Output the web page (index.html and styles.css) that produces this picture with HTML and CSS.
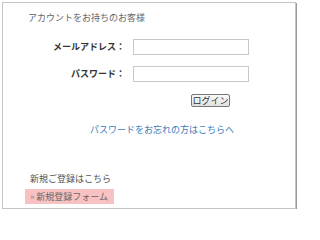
FILE: index.html
```html
<!DOCTYPE html>
<html lang="ja">
<head>
<meta charset="utf-8">
<link rel="stylesheet" href="styles.css">
</head>
<body>
<div class="box">
  <div class="heading">アカウントをお持ちのお客様</div>
  <div class="form">
    <div class="row">
      <label class="label">メールアドレス：</label>
      <input class="field" type="text">
    </div>
    <div class="row">
      <label class="label">パスワード：</label>
      <input class="field" type="password">
    </div>
  </div>
  <div class="btnrow"><button class="btn">ログイン</button></div>
  <div class="forgot"><a href="#" class="link">パスワードをお忘れの方はこちらへ</a></div>
  <div class="newhead">新規ご登録はこちら</div>
  <div class="newbar"><span class="raquo">»</span> 新規登録フォーム</div>
</div>
</body>
</html>
```
FILE: styles.css
```css
html, body {
  margin: 0;
  padding: 0;
  background: #fff;
}
body {
  font-family: "Noto Sans CJK JP", "Noto Sans", sans-serif;
  font-size: 9px;
  color: #555;
}
.box {
  margin: 2px 0 0 2px;
  width: 292px;
  height: 205px;
  border: 1px solid #c4c4c4;
  box-shadow: 1px 1px 0 #9a9a9a;
}
.heading {
  margin-top: 9px;
  padding-left: 25px;
  line-height: 12px;
  color: #666;
}
.form {
  margin-top: 15px;
  display: flex;
  flex-direction: column;
  gap: 11px;
}
.row {
  display: flex;
  align-items: center;
  gap: 8px;
  height: 16px;
}
.label {
  width: 122px;
  text-align: right;
  font-weight: bold;
  color: #333;
  line-height: 12px;
}
.field {
  box-sizing: border-box;
  width: 116px;
  height: 16px;
  margin: 0;
  padding: 0 2px;
  border: 1px solid #c8c8c8;
  background: #fff;
}
.btnrow {
  margin-top: 12px;
  padding-left: 188px;
  height: 13px;
}
.btn {
  box-sizing: border-box;
  width: 39px;
  height: 13px;
  margin: 0;
  padding: 0;
  font-family: "Noto Sans CJK JP", sans-serif;
  font-size: 9px;
  line-height: 11px;
  color: #333;
  border: 1px solid #777;
  border-radius: 2px;
  background: linear-gradient(#fafafa, #e2e2e2);
}
.forgot {
  margin-top: 17px;
  padding-left: 87px;
  line-height: 12px;
}
.link {
  color: #3a7cbd;
  text-decoration: none;
}
.newhead {
  margin-top: 37px;
  padding-left: 27px;
  line-height: 12px;
  color: #555;
}
.newbar {
  margin: 4px 0 0 22px;
  width: 89px;
  height: 15px;
  line-height: 15px;
  background: #f9c2c2;
  color: #666;
  box-sizing: border-box;
  padding-left: 5px;
}
.raquo {
  color: #888;
}
```
